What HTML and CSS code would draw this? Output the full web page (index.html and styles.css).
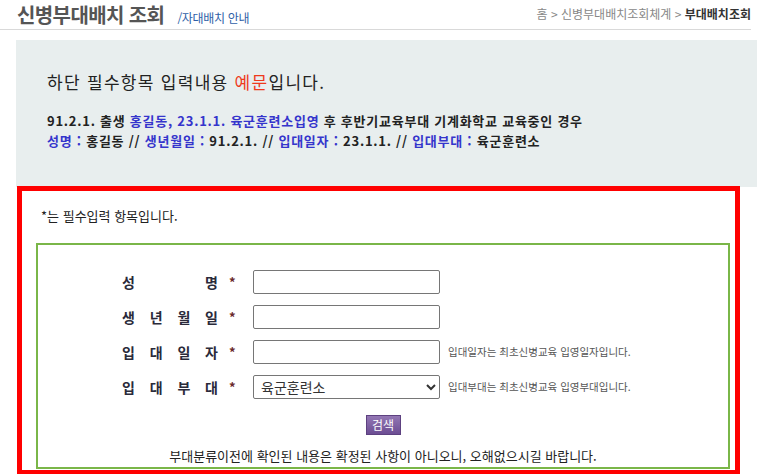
FILE: index.html
```html
<!DOCTYPE html>
<html lang="ko">
<head>
    <meta charset="UTF-8">
    <meta name="viewport" content="width=device-width, initial-scale=1.0"/>
    <title>신병부대배치 조회</title>
    <link rel="stylesheet" href="styles.css">
</head>
<body>
<div class="header">
    <h1 class="title">신병부대배치 조회 <span class="sub">/자대배치 안내</span></h1>
    <div class="crumb">홈 &gt; 신병부대배치조회체계 &gt; <b>부대배치조회</b></div>
</div>

<div class="example">
    <p class="ex-head">하단 필수항목 입력내용 <span class="red">예문</span>입니다.</p>
    <p class="ex-line">91.2.1. 출생 <span class="blue">홍길동, 23.1.1. 육군훈련소입영</span> 후 후반기교육부대 기계화학교 교육중인 경우</p>
    <p class="ex-line"><span class="blue">성명 :</span> 홍길동 // <span class="blue">생년월일 :</span> 91.2.1. // <span class="blue">입대일자 :</span> 23.1.1. // <span class="blue">입대부대 :</span> 육군훈련소</p>
</div>

<div class="search-area">
    <p class="required">*는 필수입력 항목입니다.</p>
    <div class="form-box">
        <div class="form-grid">
            <label class="lbl" for="name">성 명</label>
            <span class="star">*</span>
            <input id="name" class="field" type="text">
            <span></span>

            <label class="lbl" for="birth">생 년 월 일</label>
            <span class="star">*</span>
            <input id="birth" class="field" type="text">
            <span></span>

            <label class="lbl" for="enter">입 대 일 자</label>
            <span class="star">*</span>
            <input id="enter" class="field" type="text">
            <span class="note">입대일자는 최초신병교육 입영일자입니다.</span>

            <label class="lbl" for="unit">입 대 부 대</label>
            <span class="star">*</span>
            <select id="unit" class="field">
                <option>육군훈련소</option>
            </select>
            <span class="note">입대부대는 최초신병교육 입영부대입니다.</span>
        </div>
        <div class="btn-row"><button class="btn-search" type="button">검색</button></div>
        <p class="notice">부대분류이전에 확인된 내용은 확정된 사항이 아니오니, 오해없으시길 바랍니다.</p>
    </div>
</div>
</body>
</html>
```

FILE: styles.css
```css
body {
    margin: 0;
    font-family: "Noto Sans CJK KR", "Noto Sans", sans-serif;
    color: #333;
    background: #fff;
    overflow: hidden;
}

p {
    margin: 0;
}

/* header */
.header {
    display: flex;
    justify-content: space-between;
    align-items: flex-end;
    width: 751px;
    height: 29px;
    border-bottom: 1px solid #d9d9d9;
}

.title {
    margin: 0 0 0 17px;
    font-size: 20px;
    line-height: 29px;
    letter-spacing: -0.6px;
    color: #555;
}

.title .sub {
    margin-left: 8px;
    font-size: 12px;
    line-height: 1;
    font-weight: normal;
    letter-spacing: -0.3px;
    color: #2f5fa8;
}

.crumb {
    margin-bottom: 8px;
    font-size: 12px;
    line-height: 14px;
    color: #888;
}

.crumb b {
    color: #333;
}

/* example box */
.example {
    margin: 10px 0 0 16px;
    height: 147px;
    padding: 31px 0 0 31px;
    box-sizing: border-box;
    background: #e8eeee;
}

.ex-head {
    font-size: 17px;
    line-height: 22px;
    letter-spacing: 1.3px;
    color: #222;
    margin-bottom: 18px;
}

.ex-line {
    font-size: 13px;
    font-weight: bold;
    line-height: 20px;
    letter-spacing: 0.75px;
    color: #222;
}

.red {
    color: #ee3a1c;
}

.blue {
    color: #3535cc;
}

/* search area */
.search-area {
    margin: -1px 0 0 17px;
    width: 723px;
    height: 289px;
    box-sizing: border-box;
    border: 5px solid #ff0000;
    padding: 16px 5px 0 14px;
}

.required {
    padding-left: 5px;
    font-size: 13px;
    line-height: 18px;
    color: #222;
    margin-bottom: 18px;
}

.form-box {
    border: 2px solid #7ab648;
    height: 226px;
    box-sizing: border-box;
    padding-top: 25px;
}

.form-grid {
    display: grid;
    grid-template-columns: 96px 35px 187px auto;
    grid-auto-rows: 24px;
    row-gap: 11px;
    align-items: center;
    padding-left: 84px;
}

.lbl {
    font-size: 14px;
    font-weight: bold;
    line-height: 24px;
    color: #2a2a3a;
    text-align: justify;
    text-align-last: justify;
}

.star {
    padding-left: 11px;
    font-size: 13px;
    font-weight: bold;
    line-height: 24px;
    color: #6b2a2a;
}

.field {
    width: 187px;
    height: 24px;
    box-sizing: border-box;
    margin: 0;
    border: 1px solid #767676;
    border-radius: 2px;
    font-family: inherit;
    font-size: 14px;
    color: #333;
    background: #fff;
}

select.field {
    padding-left: 3px;
}

.note {
    padding-left: 8px;
    font-size: 10.5px;
    line-height: 24px;
    color: #555;
    white-space: nowrap;
}

.btn-row {
    margin-top: 16px;
    line-height: 0;
    text-align: center;
}

.btn-search {
    width: 35px;
    height: 20px;
    padding: 0;
    border: 1px solid #5d4180;
    background: linear-gradient(#9377b4, #6c4d93);
    color: #fff;
    font-family: inherit;
    font-size: 12px;
    line-height: 18px;
}

.notice {
    margin-top: 12px;
    text-align: center;
    font-size: 13px;
    line-height: 18px;
    color: #222;
}
```
